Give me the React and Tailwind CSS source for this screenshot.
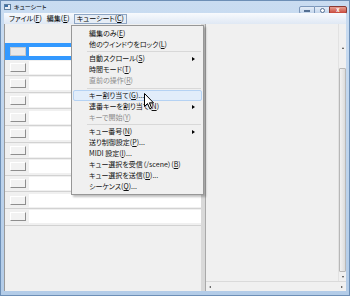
const FONT = "font-['Meiryo_UI','Noto_Sans_CJK_JP',sans-serif] [font-feature-settings:'palt']";

const menuItems = [
  { t: '編集のみ', k: 'E' },
  { t: '他のウインドウをロック', k: 'L' },
  'sep',
  { t: '自動スクロール', k: 'S', sub: true },
  { t: '時間モード', k: 'T' },
  { t: '直前の操作', k: 'R', dis: true },
  'sep',
  { t: 'キー割り当て', k: 'G', dots: true, hot: true },
  { t: '連番キーを割り当て', k: 'N', sub: true },
  { t: 'キーで開始', k: 'Y', dis: true },
  'sep',
  { t: 'キュー番号', k: 'N', sub: true },
  { t: '送り制御設定', k: 'P', dots: true },
  { t: 'MIDI 設定', k: 'I', dots: true },
  { t: 'キュー選択を受信（/scene）', k: 'B' },
  { t: 'キュー選択を送信', k: 'D', dots: true },
  { t: 'シーケンス', k: 'Q', dots: true },
];

function Label({ t, k, dots }) {
  return (
    <span>
      {t}(<span className="underline underline-offset-1">{k}</span>){dots && '...'}
    </span>
  );
}

function CueRow({ selected }) {
  if (selected) {
    return (
      <div className="flex h-[16.6px] items-center bg-[#3399ff] pl-[5px] pr-[1px]">
        <div className="h-[9px] w-[16px] border border-[#c9c9c9] bg-[#e9e9e9]" />
        <div className="ml-[3px] h-[9px] flex-1 bg-white" />
      </div>
    );
  }
  return (
    <div className="flex h-[16.6px] items-center border-b border-[#d2d2d2] bg-[#f0f0f0] pl-[5px]">
      <div className="h-[9px] w-[16px] border-b border-r border-t border-l border-b-[#8e8e8e] border-r-[#8e8e8e] border-t-white border-l-white bg-[#f2f2f2]" />
      <div className="ml-[3px] h-[13px] flex-1 bg-white" />
    </div>
  );
}

function Dropdown() {
  return (
    <div className="absolute left-[70px] top-[24px] w-[133px] border border-[#979797] bg-[#f0f0f0] py-[2px] text-[7px] leading-none text-[#111] shadow-[2px_2px_2px_rgba(0,0,0,0.25)]">
      {menuItems.map((it, i) =>
        it === 'sep' ? (
          <div key={i} className="flex h-[3.4px] items-center pl-[15px] pr-[2px]">
            <div className="h-px w-full bg-[#d8d8d8]" />
          </div>
        ) : (
          <div
            key={i}
            className={
              'relative mx-[1px] flex h-[11px] items-center pl-[15px] ' +
              (it.hot ? 'rounded-[2px] border border-[#b5d2f3] bg-[#e2edfa] ' : 'border border-transparent ') +
              (it.dis ? 'text-[#8d8d8d]' : '')
            }
          >
            <Label {...it} />
            {it.sub && (
              <span className="absolute right-[6px] top-[3px] h-0 w-0 border-y-[2.5px] border-l-[3px] border-y-transparent border-l-black" />
            )}
          </div>
        )
      )}
    </div>
  );
}

function Cursor() {
  return (
    <svg className="absolute left-[143px] top-[92px]" width="11" height="17" viewBox="0 0 11 17">
      <path d="M0.5 0.5 L0.5 13.5 L3.5 10.5 L5.8 15.8 L7.6 15 L5.4 9.8 L9.5 9.8 Z" fill="white" stroke="black" strokeWidth="1" strokeLinejoin="miter" />
    </svg>
  );
}

export default function App() {
  return (
    <div className={`relative flex h-[296px] w-[350px] flex-col overflow-hidden border border-[#6d8fb6] bg-gradient-to-b from-[#c9dcf1] to-[#b3cce8] ${FONT}`}>
      {/* title bar */}
      <div className="flex h-[12px] items-center pl-[3px] pr-[2px]">
        <div className="h-[6px] w-[7px] border border-[#5f7f9f] bg-[#e8eef6]">
          <div className="h-[2px] w-[3px] bg-[#3a6ea5]" />
        </div>
        <span className="ml-[3px] text-[6px] leading-none text-black">キューシート</span>
        <div className="ml-auto flex items-center pt-[6px]">
          <div className="flex h-[8px] w-[16px] items-center justify-center rounded-l-[2px] border border-[#7d98bb] bg-gradient-to-b from-[#e3ecf7] to-[#c4d6ec]">
            <div className="mt-[2px] h-[2px] w-[6px] border border-[#546f92] bg-white" />
          </div>
          <div className="flex h-[8px] w-[14px] items-center justify-center border-y border-[#7d98bb] bg-gradient-to-b from-[#e3ecf7] to-[#c4d6ec]">
            <div className="h-[5px] w-[5px] rounded-full border border-[#546f92] bg-white" />
          </div>
          <div className="flex h-[8px] w-[18px] items-center justify-center rounded-r-[2px] border border-[#8b3a33] bg-gradient-to-b from-[#e6a093] to-[#c7463a] text-[6px] font-bold leading-none text-white">
            x
          </div>
        </div>
      </div>

      <div className="flex flex-1 flex-col px-[3px] pb-[4px]">
        {/* menu bar */}
        <div className="flex h-[11px] items-center bg-gradient-to-b from-[#f8fafd] to-[#dfe8f4] text-[7px] leading-none text-black">
          <span className="ml-[4px] px-[1px]">ファイル(<span className="underline underline-offset-1">F</span>)</span>
          <span className="ml-[3px] px-[1px]">編集(<span className="underline underline-offset-1">E</span>)</span>
          <span className="ml-[3px] flex h-[10px] items-center border border-[#8ea6c4] bg-[#e6edf6] px-[2px]">
            キューシート(<span className="underline underline-offset-1">C</span>)
          </span>
        </div>

        {/* content */}
        <div className="flex flex-1 border-l border-[#9a9a9a] bg-[#f0f0f0]">
          <div className="flex w-[196px] flex-col">
            <div className="h-[19px]" />
            {Array.from({ length: 11 }).map((_, i) => (
              <CueRow key={i} selected={i === 0} />
            ))}
          </div>

          <div className="relative w-[5px] border-r border-[#a9a9a9] bg-[#d9d9d9]">
            <div className="absolute left-0 top-[19px] h-[17px] w-[3px] bg-[#3b82d6]" />
          </div>

          <div className="flex flex-1 flex-col">
            <div className="flex flex-1">
              <div className="flex-1" />
              <div className="flex w-[8px] flex-col border-l border-[#e2e2e2]">
                <div className="h-[19px]" />
                <div className="flex h-[10px] items-center justify-center">
                  <span className="h-0 w-0 border-x-[1.5px] border-b-[2px] border-x-transparent border-b-[#404040]" />
                </div>
                <div className="h-[15px]" />
                <div className="flex-1 rounded-[1px] border border-[#b8b8b8] bg-gradient-to-r from-[#f2f2f2] to-[#dcdcdc]" />
                <div className="flex h-[9px] items-center justify-center">
                  <span className="h-0 w-0 border-x-[1.5px] border-t-[2px] border-x-transparent border-t-[#404040]" />
                </div>
              </div>
            </div>
            <div className="flex h-[10px] items-center justify-between border-t border-[#dadada] px-[3px]">
              <span className="h-0 w-0 border-y-[1.5px] border-r-[2px] border-y-transparent border-r-[#404040]" />
              <span className="h-0 w-0 border-y-[1.5px] border-l-[2px] border-y-transparent border-l-[#404040]" />
            </div>
          </div>
        </div>
      </div>

      <Dropdown />
      <Cursor />
    </div>
  );
}
